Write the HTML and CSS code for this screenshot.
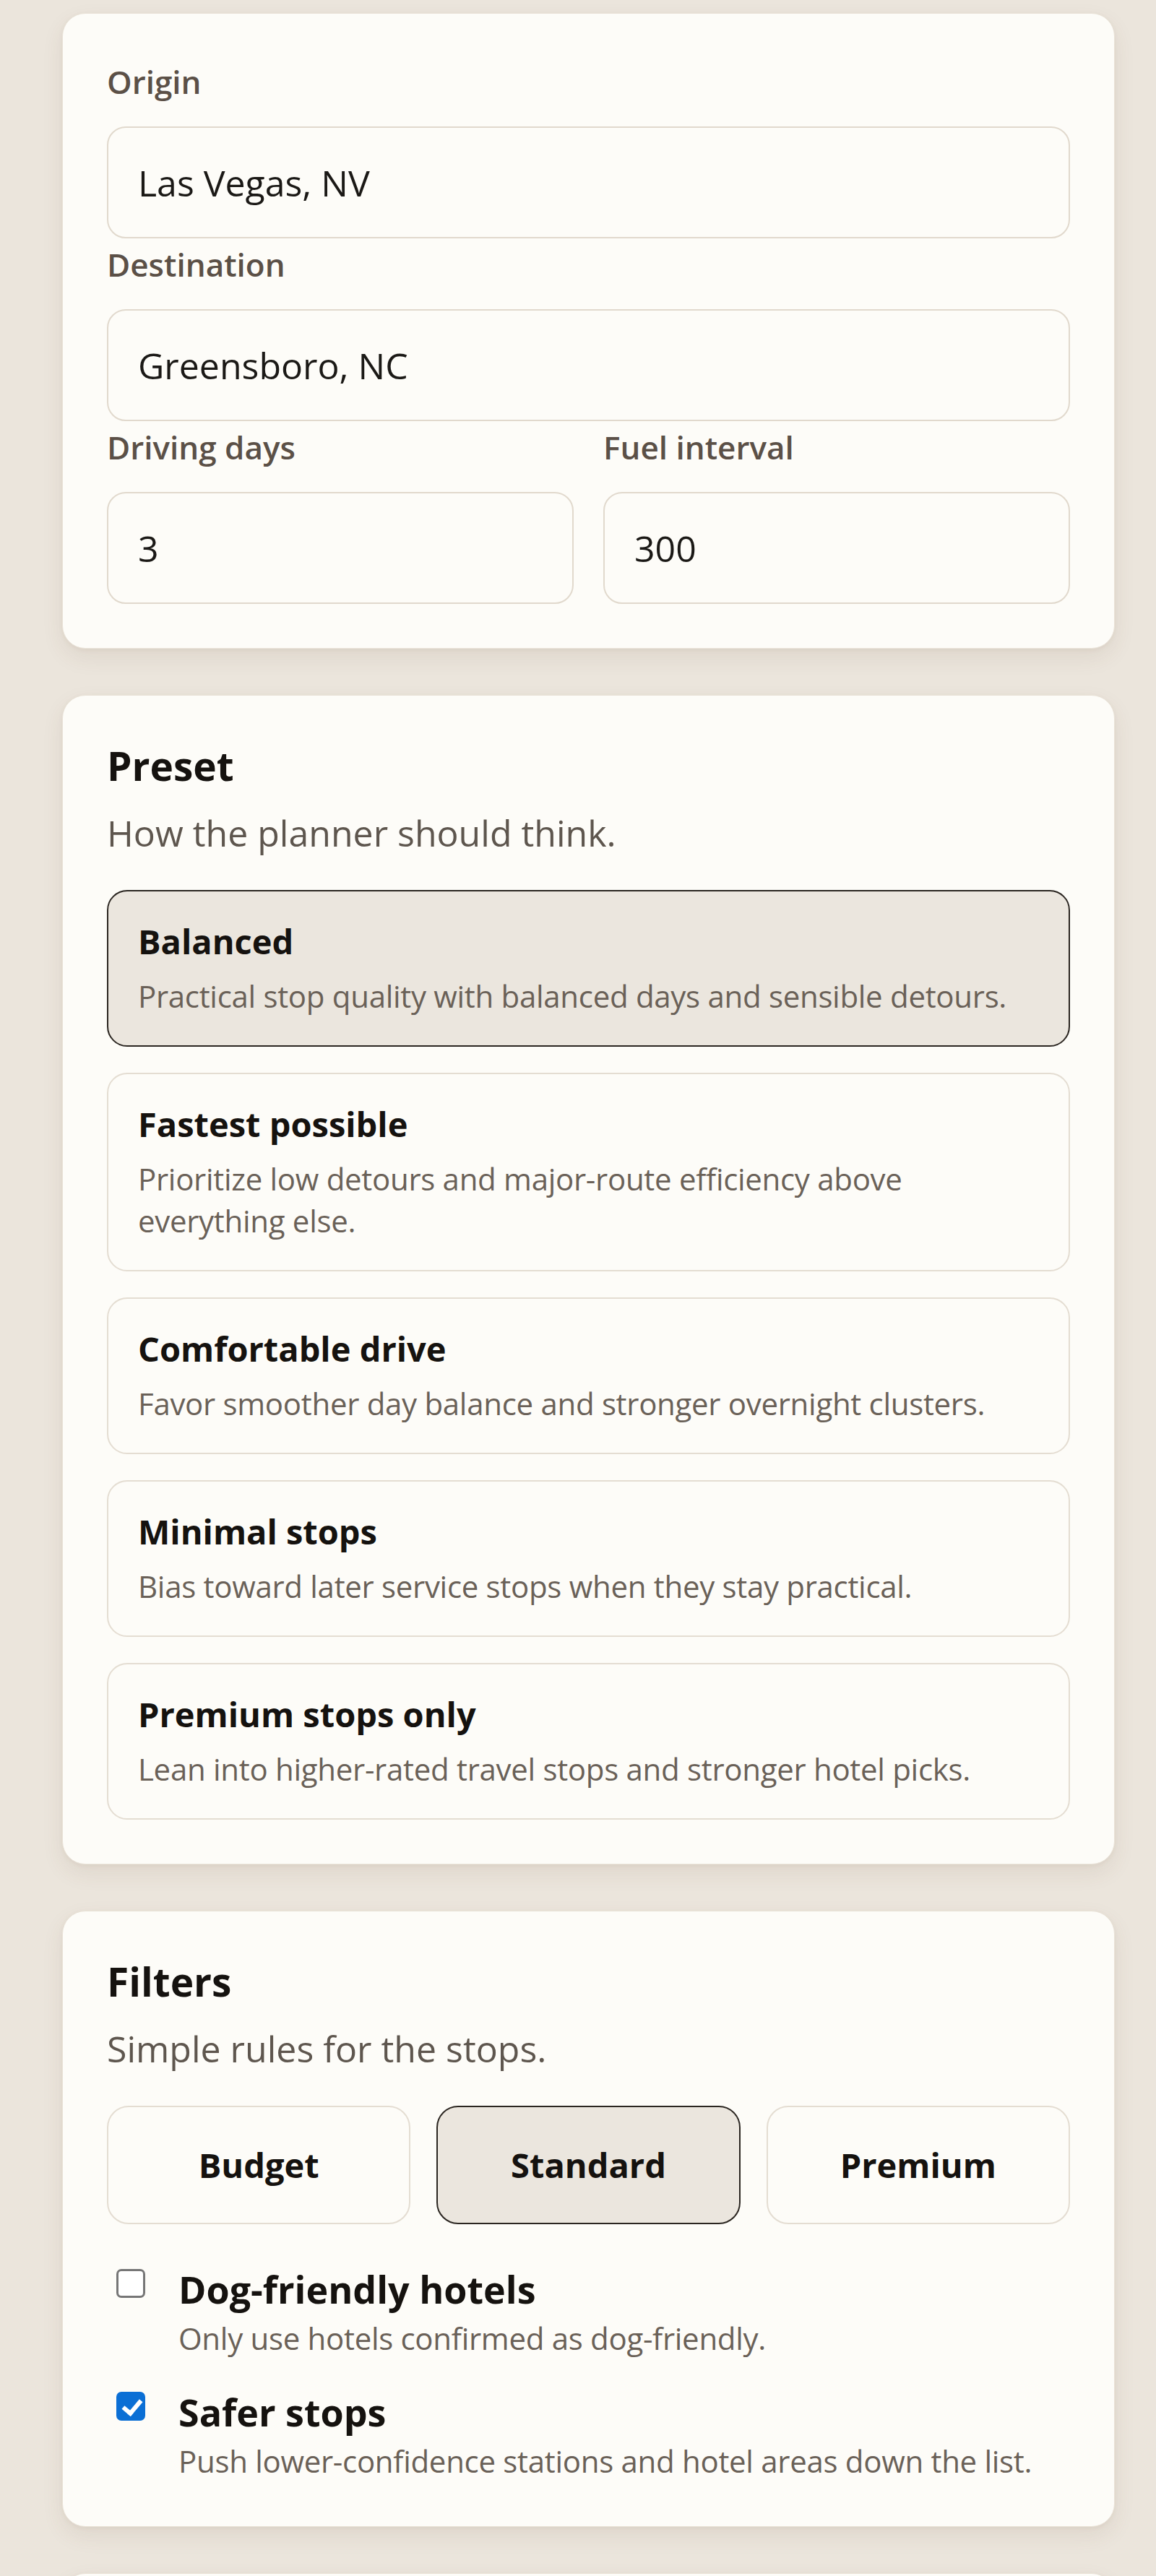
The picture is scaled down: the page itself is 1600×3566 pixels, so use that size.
FILE: index.html
```html
<!DOCTYPE html>
<html lang="en">
<head>
<meta charset="utf-8">
<title>Road trip planner</title>
<link rel="stylesheet" href="styles.css">
</head>
<body>
<main class="page">
  <section class="card">
    <div class="field">
      <label class="field-label" for="origin">Origin</label>
      <input class="text-input" id="origin" type="text" value="Las Vegas, NV">
    </div>
    <div class="field">
      <label class="field-label" for="destination">Destination</label>
      <input class="text-input" id="destination" type="text" value="Greensboro, NC">
    </div>
    <div class="field-row">
      <div class="field">
        <label class="field-label" for="days">Driving days</label>
        <input class="text-input" id="days" type="text" value="3">
      </div>
      <div class="field">
        <label class="field-label" for="fuel">Fuel interval</label>
        <input class="text-input" id="fuel" type="text" value="300">
      </div>
    </div>
  </section>

  <section class="card">
    <h2 class="card-title">Preset</h2>
    <p class="card-subtitle">How the planner should think.</p>
    <div class="option-list">
      <button class="option is-selected" type="button">
        <span class="option-title">Balanced</span>
        <span class="option-desc">Practical stop quality with balanced days and sensible detours.</span>
      </button>
      <button class="option" type="button">
        <span class="option-title">Fastest possible</span>
        <span class="option-desc">Prioritize low detours and major-route efficiency above everything else.</span>
      </button>
      <button class="option" type="button">
        <span class="option-title">Comfortable drive</span>
        <span class="option-desc">Favor smoother day balance and stronger overnight clusters.</span>
      </button>
      <button class="option" type="button">
        <span class="option-title">Minimal stops</span>
        <span class="option-desc">Bias toward later service stops when they stay practical.</span>
      </button>
      <button class="option" type="button">
        <span class="option-title">Premium stops only</span>
        <span class="option-desc">Lean into higher-rated travel stops and stronger hotel picks.</span>
      </button>
    </div>
  </section>

  <section class="card">
    <h2 class="card-title">Filters</h2>
    <p class="card-subtitle">Simple rules for the stops.</p>
    <div class="tier-group">
      <button class="tier" type="button">Budget</button>
      <button class="tier is-selected" type="button">Standard</button>
      <button class="tier" type="button">Premium</button>
    </div>
    <div class="check-list">
      <label class="check-item">
        <input class="check-box" type="checkbox">
        <span class="check-text">
          <span class="check-title">Dog-friendly hotels</span>
          <span class="check-desc">Only use hotels confirmed as dog-friendly.</span>
        </span>
      </label>
      <label class="check-item">
        <input class="check-box" type="checkbox" checked>
        <span class="check-text">
          <span class="check-title">Safer stops</span>
          <span class="check-desc">Push lower-confidence stations and hotel areas down the list.</span>
        </span>
      </label>
    </div>
  </section>

  <section class="card card-next" aria-label="Plan"></section>
</main>
</body>
</html>
```

FILE: styles.css
```css
* {
  box-sizing: border-box;
}

html,
body {
  margin: 0;
  padding: 0;
}

body {
  background: #ebe5dc;
  font-family: "Open Sans", "Noto Sans", "Liberation Sans", sans-serif;
  color: #15120f;
}

.page {
  display: flex;
  flex-direction: column;
  gap: 64px;
  padding: 18px 57px 80px 86px;
}

.card {
  background: #fdfcf8;
  border: 1px solid #e9e2d7;
  border-radius: 32px;
  padding: 61px;
  box-shadow: 0 12px 30px rgba(95, 72, 40, 0.09), 0 2px 6px rgba(95, 72, 40, 0.05);
}

.card:first-child {
  display: flex;
  flex-direction: column;
  gap: 3px;
}

.field {
  display: flex;
  flex-direction: column;
  min-width: 0;
}

.field-label {
  font-size: 44px;
  font-weight: 600;
  line-height: 66px;
  color: #5b5047;
  margin-bottom: 29px;
}

.text-input {
  width: 100%;
  height: 155px;
  border: 2px solid #e1d9cd;
  border-radius: 26px;
  background: #fdfcf8;
  padding: 0 41px;
  font-family: inherit;
  font-size: 50px;
  color: #1b1916;
  outline: none;
}

.field-row {
  display: grid;
  grid-template-columns: 1fr 1fr;
  gap: 41px;
}

.card-title {
  margin: 0;
  font-size: 55px;
  font-weight: 700;
  line-height: 72px;
  color: #15120f;
}

.card-subtitle {
  margin: 20px 0 0;
  font-size: 50px;
  line-height: 75px;
  color: #5e564e;
}

.option-list {
  display: flex;
  flex-direction: column;
  gap: 36px;
  margin-top: 41px;
}

.option {
  display: flex;
  flex-direction: column;
  align-items: flex-start;
  width: 100%;
  text-align: left;
  border: 2px solid #e4ddd2;
  border-radius: 28px;
  background: transparent;
  padding: 39px 41px;
  font-family: inherit;
  cursor: pointer;
}

.option.is-selected {
  background: #ebe6de;
  border-color: #2b2621;
}

.option-title {
  font-size: 47px;
  font-weight: 700;
  line-height: 61px;
  color: #15120f;
}

.option-desc {
  margin-top: 16px;
  font-size: 42px;
  line-height: 58px;
  letter-spacing: -0.3px;
  color: #6a6158;
}

.tier-group {
  display: grid;
  grid-template-columns: repeat(3, 1fr);
  gap: 36px;
  margin-top: 41px;
}

.tier {
  height: 164px;
  border: 2px solid #e4ddd2;
  border-radius: 30px;
  background: transparent;
  font-family: inherit;
  font-size: 47px;
  font-weight: 700;
  color: #15120f;
  cursor: pointer;
}

.tier.is-selected {
  background: #ebe6de;
  border-color: #2b2621;
}

.check-list {
  display: flex;
  flex-direction: column;
  gap: 39px;
  margin-top: 56px;
}

.check-item {
  display: flex;
  align-items: flex-start;
  cursor: pointer;
}

.check-box {
  appearance: none;
  -webkit-appearance: none;
  flex: none;
  position: relative;
  width: 40px;
  height: 40px;
  margin: 6px 46px 0 13px;
  border: 3px solid #767676;
  border-radius: 7px;
  background: #ffffff;
}

.check-box:checked {
  background: #0b6fd5;
  border-color: #0b6fd5;
}

.check-box:checked::after {
  content: "";
  position: absolute;
  left: 11px;
  top: 3px;
  width: 10px;
  height: 20px;
  border-right: 6px solid #ffffff;
  border-bottom: 6px solid #ffffff;
  transform: rotate(40deg);
}

.check-text {
  display: flex;
  flex-direction: column;
}

.check-title {
  font-size: 52px;
  font-weight: 700;
  line-height: 68px;
  color: #15120f;
}

.check-desc {
  margin-top: 5px;
  font-size: 42px;
  line-height: 58px;
  letter-spacing: -0.3px;
  color: #6a6158;
}

.card-next {
  min-height: 400px;
}
```
